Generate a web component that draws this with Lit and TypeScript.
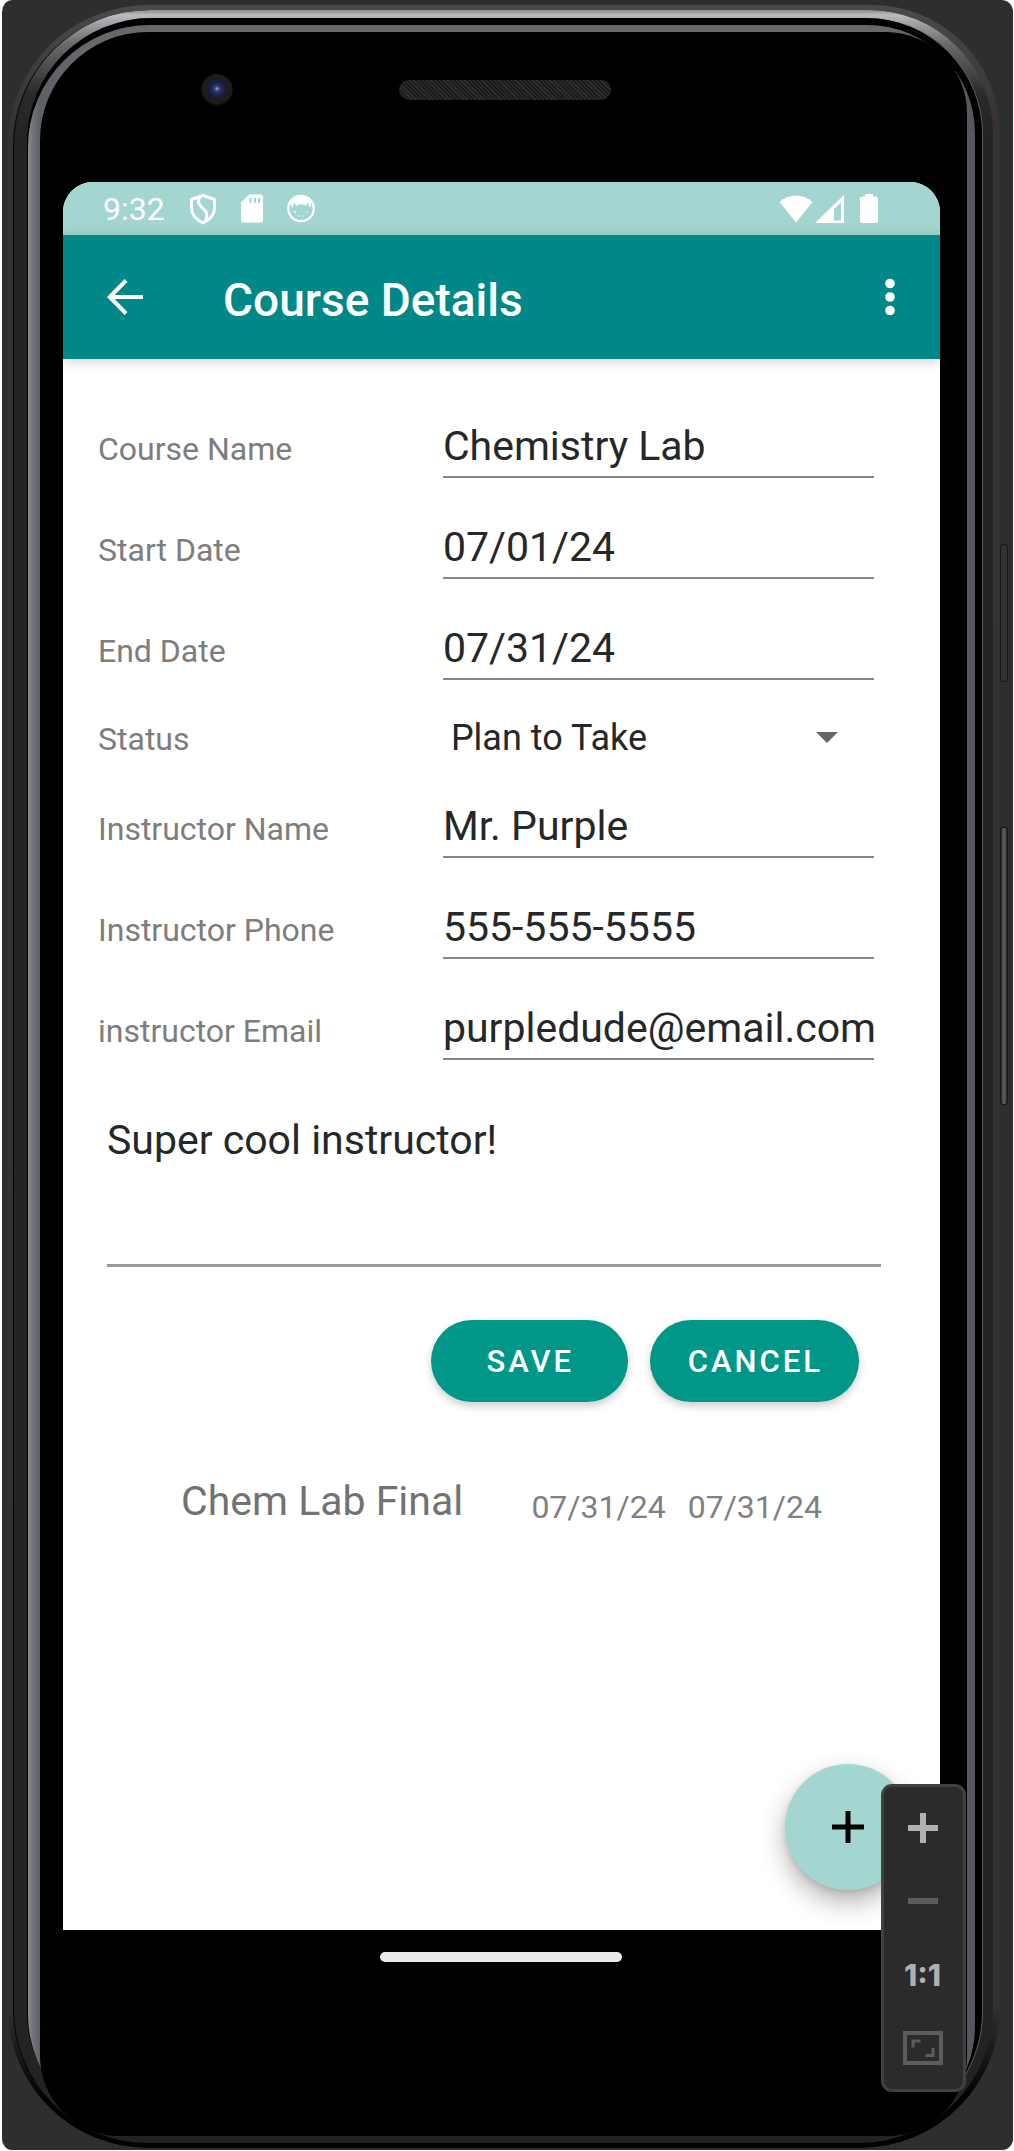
import { LitElement, html, css, svg } from "lit";
import { customElement } from "lit/decorators.js";

interface Field {
  id: string;
  label: string;
  value: string;
  type: string;
}

const COURSE_FIELDS: Field[] = [
  { id: "course-name", label: "Course Name", value: "Chemistry Lab", type: "text" },
  { id: "start-date", label: "Start Date", value: "07/01/24", type: "text" },
  { id: "end-date", label: "End Date", value: "07/31/24", type: "text" },
];

const INSTRUCTOR_FIELDS: Field[] = [
  { id: "instructor-name", label: "Instructor Name", value: "Mr. Purple", type: "text" },
  { id: "instructor-phone", label: "Instructor Phone", value: "555-555-5555", type: "tel" },
  { id: "instructor-email", label: "instructor Email", value: "purpledude@email.com", type: "text" },
];

const ASSESSMENTS = [{ name: "Chem Lab Final", start: "07/31/24", end: "07/31/24" }];

const shieldIcon = svg`<svg width="28" height="32" viewBox="0 0 28 32" fill="none" stroke="currentColor" stroke-width="3" stroke-linejoin="round">
  <path d="M14 2.500 L25.500 6.500 V15 C25.500 22 20 27 14 30 C8 27 2.500 22 2.500 15 V6.500 Z"/>
  <path d="M10.500 4 C8 10 11 13 15 16.500 C19 20 18.500 24 16 28"/>
</svg>`;

const sdIcon = svg`<svg width="22" height="29" viewBox="0 0 22 29">
  <path fill="currentColor" fill-rule="evenodd" d="M8 0.500 H20 Q22 0.500 22 2.500 V26.500 Q22 28.500 20 28.500 H2 Q0 28.500 0 26.500 V8.500 Z M8.500 4 V9 H10.500 V4 Z M13 4 V9 H15 V4 Z M17 4 V9 H19 V4 Z"/>
</svg>`;

const faceIcon = svg`<svg width="28" height="29" viewBox="0 0 28 29">
  <circle cx="14" cy="14.500" r="12.700" fill="none" stroke="currentColor" stroke-width="2.200"/>
  <path fill="currentColor" d="M3.500 10 C5.500 5 9 1.500 14 1.500 C19 1.500 22.500 5 24.500 10 L22.500 14 L21 8.500 L18.500 12 L17 10.500 H11 L9.500 12 L7 8.500 L5.500 14 Z"/>
  <circle cx="8" cy="18" r="1" fill="currentColor"/>
  <circle cx="12" cy="22" r="0.700" fill="currentColor"/>
  <circle cx="16" cy="22" r="0.700" fill="currentColor"/>
  <circle cx="20" cy="18" r="0.700" fill="currentColor"/>
</svg>`;

const wifiIcon = svg`<svg width="34" height="28" viewBox="0 0 34 28">
  <path fill="currentColor" d="M0.500 7 C9 -1.500 25 -1.500 33.500 7 L17 27.500 Z"/>
</svg>`;

const signalIcon = svg`<svg width="29" height="28" viewBox="0 0 29 28">
  <path fill="currentColor" fill-rule="evenodd" d="M29 0 V28 H0 Z M26 7.500 L19 14 V25.500 H26 Z"/>
</svg>`;

const batteryIcon = svg`<svg width="18" height="29" viewBox="0 0 18 29">
  <path fill="currentColor" d="M5 0 H13 V2.500 H15.500 Q18 2.500 18 5 V26.500 Q18 29 15.500 29 H2.500 Q0 29 0 26.500 V5 Q0 2.500 2.500 2.500 H5 Z"/>
</svg>`;

const backIcon = svg`<svg width="36" height="36" viewBox="0 0 36 36" fill="none" stroke="currentColor" stroke-width="4">
  <path d="M19 1.500 L2.800 18 L19 34.500 M3 18 H36"/>
</svg>`;

const moreIcon = svg`<svg width="10" height="38" viewBox="0 0 10 38" fill="currentColor">
  <circle cx="5" cy="5.500" r="4.800"/><circle cx="5" cy="19" r="4.800"/><circle cx="5" cy="32.500" r="4.800"/>
</svg>`;

const fitIcon = svg`<svg width="40" height="34" viewBox="0 0 40 34" fill="none" stroke="currentColor">
  <rect x="2" y="2" width="36" height="30" stroke-width="4"/>
  <path stroke-width="3" d="M10 16.500 V10 H17.500 M30 17 V24.500 H22.500"/>
</svg>`;

@customElement("app-root")
export class AppRoot extends LitElement {
  static styles = css`
    :host {
      display: block;
      background: #ffffff;
      font-family: Roboto, "Liberation Sans", sans-serif;
      color: #262728;
    }
    * {
      box-sizing: border-box;
    }
    button,
    input,
    select,
    textarea {
      font: inherit;
      color: inherit;
      border: 0;
      border-radius: 0;
      margin: 0;
      padding: 0;
      background: none;
      outline: none;
    }
    svg {
      display: block;
    }

    /* Emulator window and the rings of the phone's casing */
    .backdrop {
      position: relative;
      display: flex;
      min-height: 100vh;
      border: solid #ffffff;
      border-width: 0 1px 1px 2px;
      border-radius: 12px;
      padding: 5px 13px 2px 6px;
      background: #2d2e30;
    }
    .shell,
    .rim,
    .gap,
    .glint,
    .face,
    .screen {
      display: flex;
      flex: 1;
      min-width: 0;
    }
    .shell {
      padding: 5px 7px 5px 5px;
      border-radius: 140px 128px 140px 140px;
      background: linear-gradient(to bottom, #4b4949 0, #363233 120px, #322f2f calc(100% - 140px), #020202 calc(100% - 50px));
    }
    .rim {
      padding: 8px 11px 7px 14px;
      border-radius: 136px 124px 134px 134px;
      background: linear-gradient(to bottom, #8a8a8c 0, #bcbcc0 5px, #a0a0a4 14px, #6a6a6c 34px, #2a2a2a 84px, #232323 130px);
      box-shadow: inset 1px 0 0 #050505;
    }
    .gap {
      padding: 7px 7px 0 1px;
      border-radius: 124px 116px 124px 124px;
      background: #000000;
      box-shadow: 1px 0 0 #5c5c5c;
    }
    .glint {
      padding: 7px 8px 0 12px;
      border-radius: 122px 108px 110px 122px;
      background: linear-gradient(to right, #8c8d90 0, #74777c 4px, #5c6068 12px, #68676c 50px, #68676c calc(100% - 60px), #55555b 100%);
    }
    .face {
      position: relative;
      flex-direction: column;
      border-radius: 108px 81px 80px 80px;
      padding: 0 27px 0 23px;
      background: #000000;
    }

    .hardware {
      display: grid;
      grid-template-columns: 1fr 212px 1fr;
      align-items: center;
      height: 150px;
      padding: 0 0 34px 6px;
    }
    .camera {
      width: 32px;
      height: 32px;
      margin-left: 132px;
      border-radius: 50%;
      background: radial-gradient(circle at 50% 46%, #8fa0d0 0, #2a3568 3px, #151c40 8px, #1c1d22 10px, #1a1a1c 15px, #0a0a0a 16px);
    }
    .speaker {
      height: 20px;
      border-radius: 10px;
      background: repeating-linear-gradient(45deg, #303030 0 1px, #1c1c1c 1px 3px);
    }

    /* App screen */
    .screen {
      position: relative;
      flex-direction: column;
      border-radius: 30px 30px 0 0;
      overflow: hidden;
      background: #ffffff;
    }
    .status {
      display: flex;
      align-items: center;
      height: 53px;
      padding: 0 62px 0 40px;
      background: #a3d6d0;
      color: #ffffff;
      font-size: 32px;
      line-height: 38px;
    }
    .notices {
      display: flex;
      align-items: center;
      gap: 24px;
      flex: 1;
    }
    .signals {
      display: flex;
      align-items: center;
      gap: 2px;
    }
    .battery {
      margin-left: 14px;
    }
    .appbar {
      display: flex;
      align-items: center;
      height: 124px;
      padding: 0 45px 0 44px;
      background: #008787;
      color: #ffffff;
      box-shadow: 0 2px 12px rgba(0, 0, 0, 0.2);
      z-index: 1;
    }
    .title {
      flex: 1;
      margin: 0 0 0 80px;
      padding-top: 5px;
      font-size: 46px;
      line-height: 54px;
      font-weight: 500;
    }

    .form {
      display: flex;
      flex-direction: column;
      gap: 27px;
      padding: 45px 66px 0 35px;
    }
    .row {
      display: grid;
      grid-template-columns: 4fr 5fr;
      align-items: baseline;
    }
    .label {
      color: #7d7d7d;
      font-size: 32px;
      line-height: 36px;
    }
    .input {
      width: 100%;
      height: 74px;
      padding: 18px 0 6px;
      border-bottom: 2px solid #868686;
      font-size: 41px;
      line-height: 48px;
    }
    .picker {
      display: grid;
      align-items: center;
    }
    .select {
      grid-area: 1 / 1;
      width: 100%;
      height: 50px;
      appearance: none;
      padding: 12px 48px 0 8px;
      font-size: 36px;
      line-height: 38px;
    }
    .arrow {
      grid-area: 1 / 1;
      justify-self: end;
      margin: 10px 36px 0 0;
      pointer-events: none;
    }
    .note {
      display: block;
      height: 177px;
      margin: 3px -7px 0 9px;
      padding: 26px 0 0;
      border-bottom: 3px solid #9a9a9a;
      font-size: 41px;
      line-height: 48px;
      resize: none;
    }
    .actions {
      display: flex;
      justify-content: flex-end;
      gap: 22px;
      padding: 26px 15px 0 0;
    }
    .pill {
      min-width: 197px;
      height: 82px;
      padding: 2px 36px 0 38px;
      border-radius: 41px;
      background: #009688;
      color: #ffffff;
      font-size: 31px;
      line-height: 36px;
      font-weight: 500;
      letter-spacing: 3px;
      box-shadow: 0 4px 8px rgba(0, 0, 0, 0.2);
    }
    .assessments {
      margin: 0;
      padding: 75px 118px 120px 118px;
      list-style: none;
      color: #808080;
      font-size: 32px;
      line-height: 36px;
    }
    .assessment {
      display: grid;
      grid-template-columns: 1fr auto auto;
      column-gap: 22px;
      align-items: end;
    }
    .name {
      color: #727272;
      font-size: 41px;
      line-height: 48px;
    }

    .fab {
      position: absolute;
      right: 29px;
      bottom: 40px;
      display: grid;
      place-items: center;
      width: 126px;
      height: 126px;
      border-radius: 50%;
      background: #a3d6d0;
      color: #000000;
      box-shadow: 0 12px 26px rgba(0, 0, 0, 0.3), 0 3px 6px rgba(0, 0, 0, 0.1);
    }
    .navbar {
      display: flex;
      justify-content: center;
      height: 206px;
      padding: 22px 2px 0 0;
    }
    .handle {
      width: 242px;
      height: 10px;
      border-radius: 5px;
      background: #ebe9e9;
    }

    /* Zoom controls floating over the device */
    .zoom {
      position: absolute;
      right: 47px;
      bottom: 58px;
      display: flex;
      flex-direction: column;
      width: 85px;
      height: 308px;
      padding: 4px 2px 4px 0;
      border: 3px solid #414141;
      border-radius: 11px;
      background: #2b2b2b;
      color: #b0b0b2;
    }
    .tool {
      display: grid;
      place-items: center;
      flex: 1;
      font-family: Inter, "Liberation Sans", sans-serif;
      font-size: 30px;
      line-height: 36px;
      font-weight: 800;
    }
    .dim {
      color: #5c5c5c;
    }
    .key {
      position: absolute;
      right: 5px;
      width: 8px;
      border: 1px solid #151515;
      border-radius: 3px;
    }
    .power {
      top: 544px;
      height: 138px;
      background: #303231;
    }
    .volume {
      top: 827px;
      height: 278px;
      background: linear-gradient(to right, #2a2a2a, #626262, #2a2a2a);
    }
  `;

  private renderField(field: Field) {
    return html`
      <div class="row">
        <label class="label" for=${field.id}>${field.label}</label>
        <input class="input" id=${field.id} type=${field.type} .value=${field.value} />
      </div>
    `;
  }

  render() {
    return html`
      <div class="backdrop">
        <div class="shell"><div class="rim"><div class="gap"><div class="glint">
          <div class="face">
            <div class="hardware">
              <div class="camera"></div>
              <div class="speaker"></div>
            </div>

            <main class="screen">
              <div class="status">
                <div class="notices"><span>9:32</span>${shieldIcon}${sdIcon}${faceIcon}</div>
                <div class="signals">
                  ${wifiIcon}${signalIcon}
                  <span class="battery">${batteryIcon}</span>
                </div>
              </div>
              <header class="appbar">
                <button type="button" aria-label="Back">${backIcon}</button>
                <h1 class="title">Course Details</h1>
                <button type="button" aria-label="More options">${moreIcon}</button>
              </header>

              <form class="form">
                ${COURSE_FIELDS.map((f) => this.renderField(f))}
                <div class="row">
                  <label class="label" for="status">Status</label>
                  <div class="picker">
                    <select class="select" id="status">
                      <option selected>Plan to Take</option>
                    </select>
                    <svg class="arrow" width="22" height="11" viewBox="0 0 22 11">
                      <path fill="#666666" d="M0 0 H22 L11 11 Z" />
                    </svg>
                  </div>
                </div>
                ${INSTRUCTOR_FIELDS.map((f) => this.renderField(f))}
                <textarea class="note" aria-label="Notes" .value=${"Super cool instructor!"}></textarea>
                <div class="actions">
                  <button class="pill" type="button">SAVE</button>
                  <button class="pill" type="button">CANCEL</button>
                </div>
              </form>

              <ul class="assessments">
                ${ASSESSMENTS.map(
                  (a) => html`
                    <li class="assessment">
                      <span class="name">${a.name}</span><span>${a.start}</span><span>${a.end}</span>
                    </li>
                  `
                )}
              </ul>

              <button class="fab" type="button" aria-label="Add assessment">
                <svg width="32" height="32" viewBox="0 0 32 32" stroke="currentColor" stroke-width="5">
                  <path d="M16 0 V32 M0 16 H32" />
                </svg>
              </button>
            </main>

            <div class="navbar"><div class="handle"></div></div>
          </div>
        </div></div></div></div>

        <div class="key power"></div>
        <div class="key volume"></div>

        <div class="zoom">
          <button class="tool" type="button" aria-label="Zoom in">
            <svg width="30" height="30" viewBox="0 0 30 30" stroke="currentColor" stroke-width="6">
              <path d="M15 0 V30 M0 15 H30" />
            </svg>
          </button>
          <button class="tool dim" type="button" aria-label="Zoom out">
            <svg width="30" height="6" viewBox="0 0 30 6"><rect width="30" height="6" fill="currentColor" /></svg>
          </button>
          <button class="tool" type="button">1:1</button>
          <button class="tool dim" type="button" aria-label="Zoom to fit">${fitIcon}</button>
        </div>
      </div>
    `;
  }
}
